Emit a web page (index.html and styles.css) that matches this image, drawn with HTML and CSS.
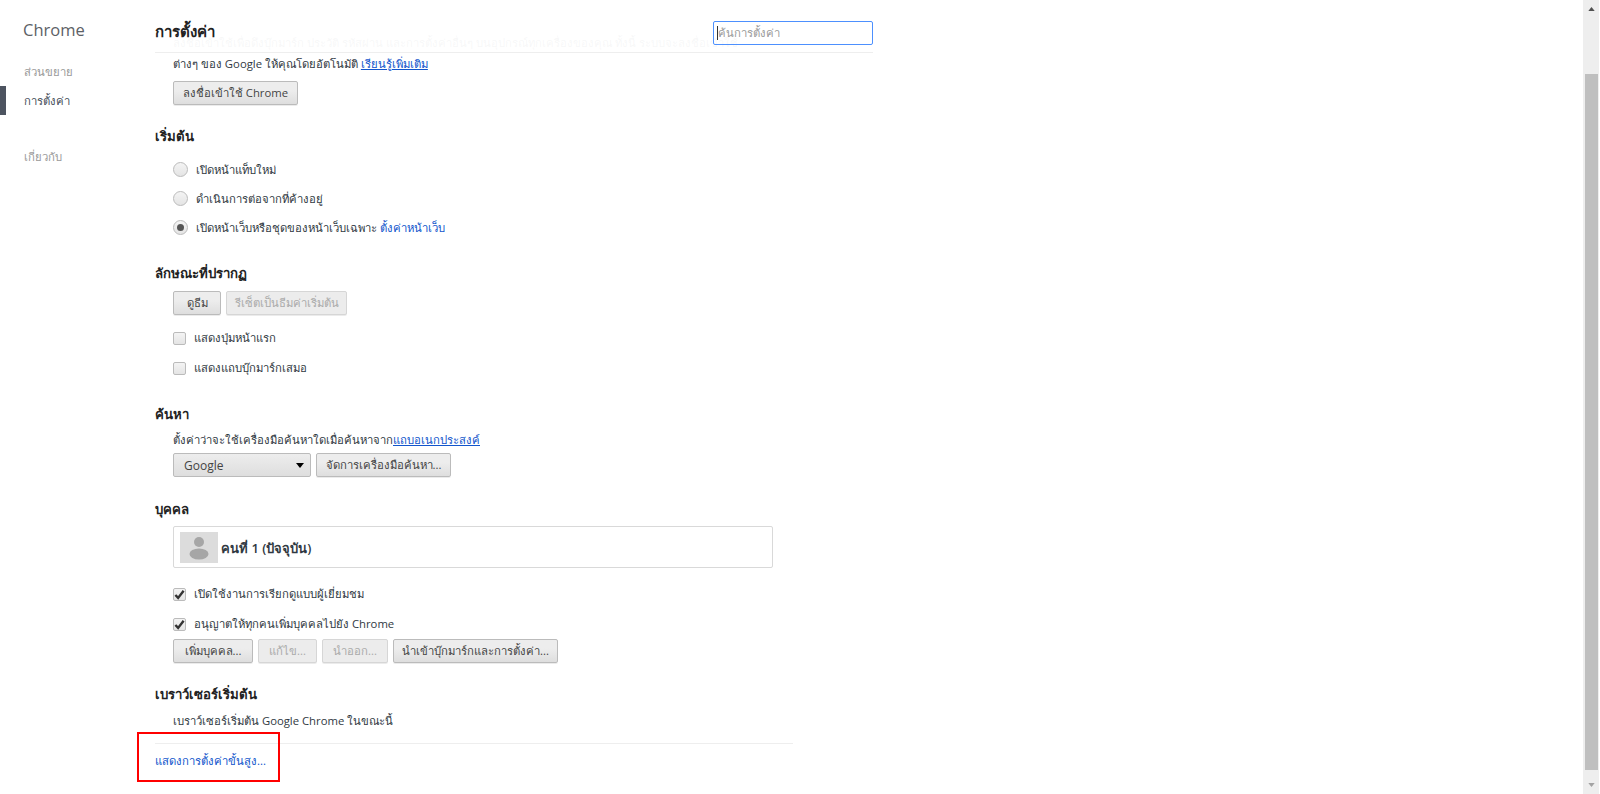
FILE: index.html
```html
<!DOCTYPE html>
<html lang="th">
<head>
<meta charset="utf-8">
<title>การตั้งค่า</title>
<link rel="stylesheet" href="styles.css">
</head>
<body>
<div class="page">
  <nav class="sidebar">
    <h1 class="brand">Chrome</h1>
    <ul class="nav-list">
      <li class="nav-item">ส่วนขยาย</li>
      <li class="nav-item nav-item-active">การตั้งค่า</li>
      <li class="nav-item nav-item-about">เกี่ยวกับ</li>
    </ul>
  </nav>
  <main class="main">
    <header class="top-bar">
      <h2 class="top-title">การตั้งค่า</h2>
      <div class="search"><span class="caret"></span><span class="search-hint">ค้นการตั้งค่า</span></div>
    </header>
    <section class="sign-in">
      <p class="text">ลงชื่อเข้าใช้เพื่อดึงบุ๊กมาร์ก ประวัติ รหัสผ่าน และการตั้งค่าอื่นๆ บนอุปกรณ์ทุกเครื่องของคุณ ทั้งนี้ ระบบจะลงชื่อเข้าใช้</p>
      <p class="text">ต่างๆ ของ Google ให้คุณโดยอัตโนมัติ <a class="link-under">เรียนรู้เพิ่มเติม</a></p>
      <div class="btn-row"><button class="btn btn-signin">ลงชื่อเข้าใช้ Chrome</button></div>
    </section>
    <section class="section section-start">
      <h3 class="heading">เริ่มต้น</h3>
      <div class="radios">
        <label class="choice"><span class="radio"></span>เปิดหน้าแท็บใหม่</label>
        <label class="choice"><span class="radio"></span>ดำเนินการต่อจากที่ค้างอยู่</label>
        <label class="choice"><span class="radio radio-on"></span>เปิดหน้าเว็บหรือชุดของหน้าเว็บเฉพาะ <a class="link">ตั้งค่าหน้าเว็บ</a></label>
      </div>
    </section>
    <section class="section section-look">
      <h3 class="heading">ลักษณะที่ปรากฏ</h3>
      <div class="btn-row btn-row-look">
        <button class="btn btn-theme">ดูธีม</button>
        <button class="btn btn-off btn-reset">รีเซ็ตเป็นธีมค่าเริ่มต้น</button>
      </div>
      <label class="check-row check-first"><span class="check"></span>แสดงปุ่มหน้าแรก</label>
      <label class="check-row"><span class="check"></span>แสดงแถบบุ๊กมาร์กเสมอ</label>
    </section>
    <section class="section section-search">
      <h3 class="heading">ค้นหา</h3>
      <p class="text text-search">ตั้งค่าว่าจะใช้เครื่องมือค้นหาใดเมื่อค้นหาจาก<a class="link-under">แถบอเนกประสงค์</a></p>
      <div class="btn-row">
        <div class="select"><span>Google</span><svg class="select-arrow" viewBox="0 0 10 6"><path d="M0 0h10L5 6z"/></svg></div>
        <button class="btn btn-engines">จัดการเครื่องมือค้นหา...</button>
      </div>
    </section>
    <section class="section section-people">
      <h3 class="heading">บุคคล</h3>
      <div class="people-box">
        <svg class="avatar" viewBox="0 0 38 31"><rect width="38" height="31" fill="#dcdcdc"/><circle cx="19" cy="10" r="5" fill="#a6a6a6"/><ellipse cx="19" cy="22" rx="9.5" ry="5.5" fill="#a6a6a6"/></svg>
        <span class="person">คนที่ 1 (ปัจจุบัน)</span>
      </div>
      <label class="check-row check-people"><span class="check check-on"><svg viewBox="0 0 12 11"><path d="M1.5 6l3 3.2L10.500 1.500" fill="none" stroke="#333" stroke-width="2.600"/></svg></span>เปิดใช้งานการเรียกดูแบบผู้เยี่ยมชม</label>
      <label class="check-row"><span class="check check-on"><svg viewBox="0 0 12 11"><path d="M1.5 6l3 3.2L10.500 1.500" fill="none" stroke="#333" stroke-width="2.600"/></svg></span>อนุญาตให้ทุกคนเพิ่มบุคคลไปยัง Chrome</label>
      <div class="btn-row btn-row-people">
        <button class="btn btn-add">เพิ่มบุคคล...</button>
        <button class="btn btn-off btn-edit">แก้ไข...</button>
        <button class="btn btn-off btn-remove">นำออก...</button>
        <button class="btn btn-import">นำเข้าบุ๊กมาร์กและการตั้งค่า...</button>
      </div>
    </section>
    <section class="section section-default">
      <h3 class="heading">เบราว์เซอร์เริ่มต้น</h3>
      <p class="text text-default">เบราว์เซอร์เริ่มต้น Google Chrome ในขณะนี้</p>
    </section>
    <footer class="more">
      <a class="link">แสดงการตั้งค่าขั้นสูง...</a>
      <span class="highlight"></span>
    </footer>
  </main>
  <aside class="scrollbar">
    <svg class="arrow" viewBox="0 0 8 5"><path d="M0 5L4 0l4 5z" fill="#505050"/></svg>
    <div class="thumb"></div>
    <svg class="arrow" viewBox="0 0 8 5"><path d="M0 0l4 5 4-5z" fill="#a3a3a3"/></svg>
  </aside>
</div>
</body>
</html>
```

FILE: styles.css
```css
* { box-sizing: border-box; }
html, body { margin: 0; height: 794px; overflow: hidden; background: #fff; }
body { font-family: "Open Sans", "Noto Sans", sans-serif; font-size: 11.3px; color: #303942; }
h1, h2, h3, p, ul { margin: 0; padding: 0; font-weight: normal; }
ul { list-style: none; }
.page { display: flex; height: 794px; position: relative; }

.sidebar { width: 155px; flex: none; }
.brand { font-size: 16.5px; line-height: 24px; margin: 18px 0 0 23px; color: #5c6166; }
.nav-list { margin-top: 15px; }
.nav-item { height: 29px; line-height: 29px; padding-left: 24px; color: #999; }
.nav-item-active { color: #464e5a; border-left: 6px solid #4d5460; padding-left: 18px; }
.nav-item-about { margin-top: 27px; }

.main { width: 718px; flex: none; position: relative; padding-top: 32px; }
.top-bar { position: absolute; left: 0; top: 0; width: 718px; height: 53px; background: rgba(255,255,255,.96); border-bottom: 1px solid #eee; display: flex; justify-content: space-between; padding-top: 21px; }
.top-title { font-size: 15px; line-height: 20px; font-weight: 600; color: #222; }
.search { width: 160px; height: 24px; border: 1px solid #4d90fe; border-radius: 2px; display: flex; align-items: center; padding-left: 3px; }
.caret { width: 1px; height: 14px; background: #333; }
.search-hint { color: #9a9a9a; }

.text { line-height: 21px; padding-left: 18px; }
.link-under { color: #15c; text-decoration: underline; }
.link { color: #15c; }
.btn-row { display: flex; gap: 5px; padding-left: 18px; }
.btn { height: 24px; padding: 0; font: inherit; color: #444; border: 1px solid #bbb; border-radius: 2px; background: linear-gradient(#ededed, #ededed 38%, #dedede); box-shadow: 0 1px 0 rgba(0,0,0,.08); }
.btn-off { color: #aaa; border-color: #d6d6d6; background: #ececec; }
.btn-signin { width: 125px; margin-top: 7px; }
.heading { font-size: 13.2px; line-height: 20px; font-weight: 600; color: #222; }

.section-start { margin-top: 21px; }
.radios { margin-top: 9px; }
.choice { display: flex; align-items: center; height: 29px; padding-left: 18px; white-space: pre; }
.radio { width: 15px; height: 15px; border-radius: 50%; border: 1px solid #bbb; background: linear-gradient(#f4f4f4, #e4e4e4); margin-right: 8px; flex: none; position: relative; }
.radio-on::after { content: ""; position: absolute; left: 3px; top: 3px; width: 7px; height: 7px; border-radius: 50%; background: #555; }

.section-look { margin-top: 21px; }
.btn-row-look { margin-top: 8px; }
.btn-theme { width: 48px; }
.btn-reset { width: 121px; }
.check-row { display: flex; align-items: center; height: 30px; padding-left: 18px; }
.check-first { margin-top: 8px; }
.check { width: 13px; height: 13px; flex: none; border: 1px solid #bbb; border-radius: 2px; background: linear-gradient(#f4f4f4, #e4e4e4); margin-right: 8px; display: flex; }
.check svg { width: 11px; height: 11px; }

.section-search { margin-top: 21px; }
.text-search { margin-top: 5px; }
.select { width: 138px; height: 24px; margin-top: 3px; border: 1px solid #bbb; border-radius: 2px; background: linear-gradient(#ededed, #dedede); display: flex; align-items: center; justify-content: space-between; padding: 0 6px 0 10px; font-size: 12px; color: #444; }
.select-arrow { width: 8px; height: 5px; }
.btn-engines { width: 135px; margin-top: 3px; }

.section-people { margin-top: 22px; }
.people-box { width: 600px; height: 42px; margin: 7px 0 0 18px; border: 1px solid #d9d9d9; border-radius: 2px; display: flex; align-items: center; padding-left: 6px; }
.avatar { width: 38px; height: 31px; }
.person { margin-left: 3px; font-size: 13px; font-weight: 600; padding-top: 2px; }
.check-people { margin-top: 11px; }
.btn-row-people { margin-top: 0; }
.btn-add { width: 80px; }
.btn-edit { width: 59px; }
.btn-remove { width: 66px; }
.btn-import { width: 165px; }

.section-default { margin-top: 21px; }
.text-default { margin-top: 6px; }
.more { margin-top: 12px; width: 638px; border-top: 1px solid #eee; padding-top: 6px; line-height: 21px; position: relative; }
.highlight { position: absolute; left: -18px; top: -12px; width: 143px; height: 50px; border: 2px solid #f00; }

.scrollbar { position: absolute; right: 1px; top: 0; width: 16px; height: 794px; background: #eee; display: flex; flex-direction: column; align-items: center; }
.arrow { width: 7px; height: 4px; flex: none; margin: 7px 0; }
.thumb { width: 13px; flex: 1; margin: 56px 0 6px; background: #bfbfbf; }
```
